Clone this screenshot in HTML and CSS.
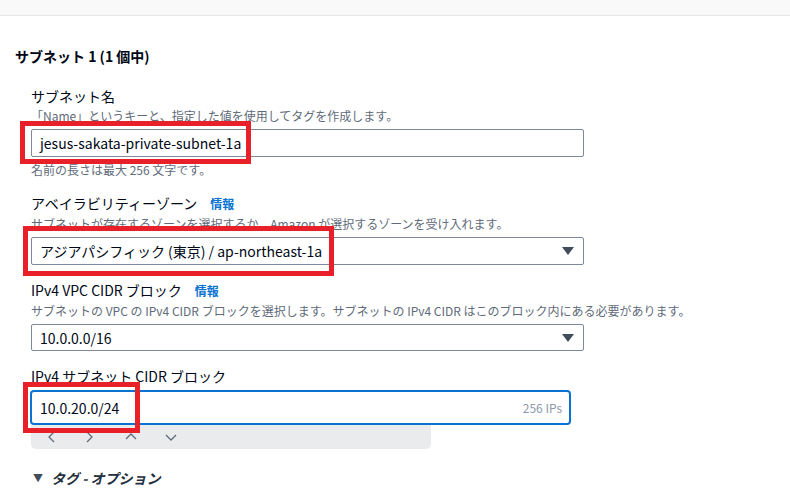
FILE: index.html
```html
<!DOCTYPE html>
<html lang="ja">
<head>
<meta charset="utf-8">
<link rel="stylesheet" href="styles.css">
</head>
<body>
<div class="topbar"></div>
<main class="panel">
  <h2 class="title">サブネット 1 (1 個中)</h2>
  <div class="fields">
    <div class="field">
      <div class="label">サブネット名</div>
      <div class="desc">「Name」というキーと、指定した値を使用してタグを作成します。</div>
      <div class="control">
        <div class="input">jesus-sakata-private-subnet-1a</div>
        <div class="mark mark-name"></div>
      </div>
      <div class="hint">名前の長さは最大 256 文字です。</div>
    </div>
    <div class="field">
      <div class="label">アベイラビリティーゾーン<span class="info">情報</span></div>
      <div class="desc">サブネットが存在するゾーンを選択するか、Amazon が選択するゾーンを受け入れます。</div>
      <div class="control">
        <div class="input select"><span>アジアパシフィック (東京) / ap-northeast-1a</span><svg class="caret" width="12" height="8" viewBox="0 0 12 8"><polygon points="0,0 12,0 6,8" fill="#414d5c"/></svg></div>
        <div class="mark mark-az"></div>
      </div>
    </div>
    <div class="field">
      <div class="label">IPv4 VPC CIDR ブロック<span class="info">情報</span></div>
      <div class="desc">サブネットの VPC の IPv4 CIDR ブロックを選択します。サブネットの IPv4 CIDR はこのブロック内にある必要があります。</div>
      <div class="control">
        <div class="input select short"><span>10.0.0.0/16</span><svg class="caret" width="12" height="8" viewBox="0 0 12 8"><polygon points="0,0 12,0 6,8" fill="#414d5c"/></svg></div>
      </div>
    </div>
    <div class="field">
      <div class="label">IPv4 サブネット CIDR ブロック</div>
      <div class="control control-tight">
        <div class="input focused"><span>10.0.20.0/24</span><span class="ips">256 IPs</span></div>
        <div class="mark mark-cidr"></div>
      </div>
      <div class="stepper">
        <svg class="st-prev" width="10" height="12" viewBox="0 0 10 12"><polyline points="7,1 2,6 7,11" fill="none" stroke="#5f6b7a" stroke-width="1.3"/></svg>
        <svg class="st-next" width="10" height="12" viewBox="0 0 10 12"><polyline points="3,1 8,6 3,11" fill="none" stroke="#5f6b7a" stroke-width="1.3"/></svg>
        <svg class="st-up" width="12" height="10" viewBox="0 0 12 10"><polyline points="1,7 6,2 11,7" fill="none" stroke="#5f6b7a" stroke-width="1.3"/></svg>
        <svg class="st-down" width="12" height="10" viewBox="0 0 12 10"><polyline points="1,3 6,8 11,3" fill="none" stroke="#5f6b7a" stroke-width="1.3"/></svg>
      </div>
    </div>
    <div class="expander"><span class="tri">▼</span><span class="exp-text">タグ - オプション</span></div>
  </div>
</main>
</body>
</html>
```
FILE: styles.css
```css
body {
  margin: 0;
  background: #ffffff;
  color: #000716;
  font-family: "Noto Sans CJK JP", "Noto Sans", sans-serif;
}
.topbar {
  height: 15px;
  background: #f9f9f9;
  border-bottom: 1px solid #e6e6e6;
}
.panel {
  padding: 31px 0 0 15px;
}
.title {
  margin: 0;
  font-size: 14px;
  line-height: 18px;
  padding-bottom: 2px;
  font-weight: 700;
}
.fields {
  margin-top: 20px;
  padding-left: 16px;
  width: 553px;
  display: flex;
  flex-direction: column;
  gap: 16px;
}
.label {
  font-size: 14px;
  line-height: 18px;
  padding-bottom: 2px;
}
.info {
  margin-left: 13px;
  font-size: 12px;
  font-weight: 700;
  color: #0972d3;
}
.desc {
  margin-top: 1px;
  font-size: 12px;
  line-height: 16px;
  color: #5f6b7a;
  white-space: nowrap;
}
.control {
  position: relative;
  margin-top: 5px;
}
.control-tight {
  margin-top: 3px;
}
.input {
  box-sizing: border-box;
  height: 28px;
  border: 1px solid #7d8998;
  border-radius: 2px;
  padding: 0 8px;
  font-size: 14px;
  line-height: 26px;
  display: flex;
  align-items: center;
  justify-content: space-between;
}
.select {
  padding-right: 9px;
}
.short {
  height: 27px;
}
.caret {
  display: block;
}
.focused {
  height: 35px;
  width: 541px;
  margin-left: -1px;
  border: 2px solid #0972d3;
  border-radius: 4px;
  padding: 0 7px 0 8px;
}
.ips {
  font-size: 12px;
  color: #8d99a8;
}
.hint {
  margin-top: 5px;
  font-size: 12px;
  line-height: 16px;
  color: #5f6b7a;
}
.mark {
  position: absolute;
  border: 5px solid #e8202a;
  box-sizing: border-box;
}
.mark-name {
  left: -11px;
  top: -8px;
  width: 231px;
  height: 43px;
}
.mark-az {
  left: -8px;
  top: -11px;
  width: 311px;
  height: 50px;
}
.mark-cidr {
  left: -8px;
  top: -8px;
  width: 117px;
  height: 51px;
}
.stepper {
  width: 400px;
  height: 24px;
  background: #e9ebed;
  border-radius: 0 0 5px 5px;
  display: flex;
  align-items: center;
  box-sizing: border-box;
  padding-left: 16px;
}
.stepper svg {
  display: block;
}
.st-next {
  margin-left: 27px;
}
.st-up {
  margin-left: 31px;
}
.st-down {
  margin-left: 28px;
}
.expander {
  margin-top: 4px;
  margin-left: 2px;
  font-size: 14px;
  line-height: 18px;
  font-weight: 700;
  color: #232f3e;
  display: flex;
  align-items: center;
}
.tri {
  font-size: 10px;
  font-style: normal;
  color: #414d5c;
  margin-right: 8px;
}
.exp-text {
  font-style: italic;
}
```
